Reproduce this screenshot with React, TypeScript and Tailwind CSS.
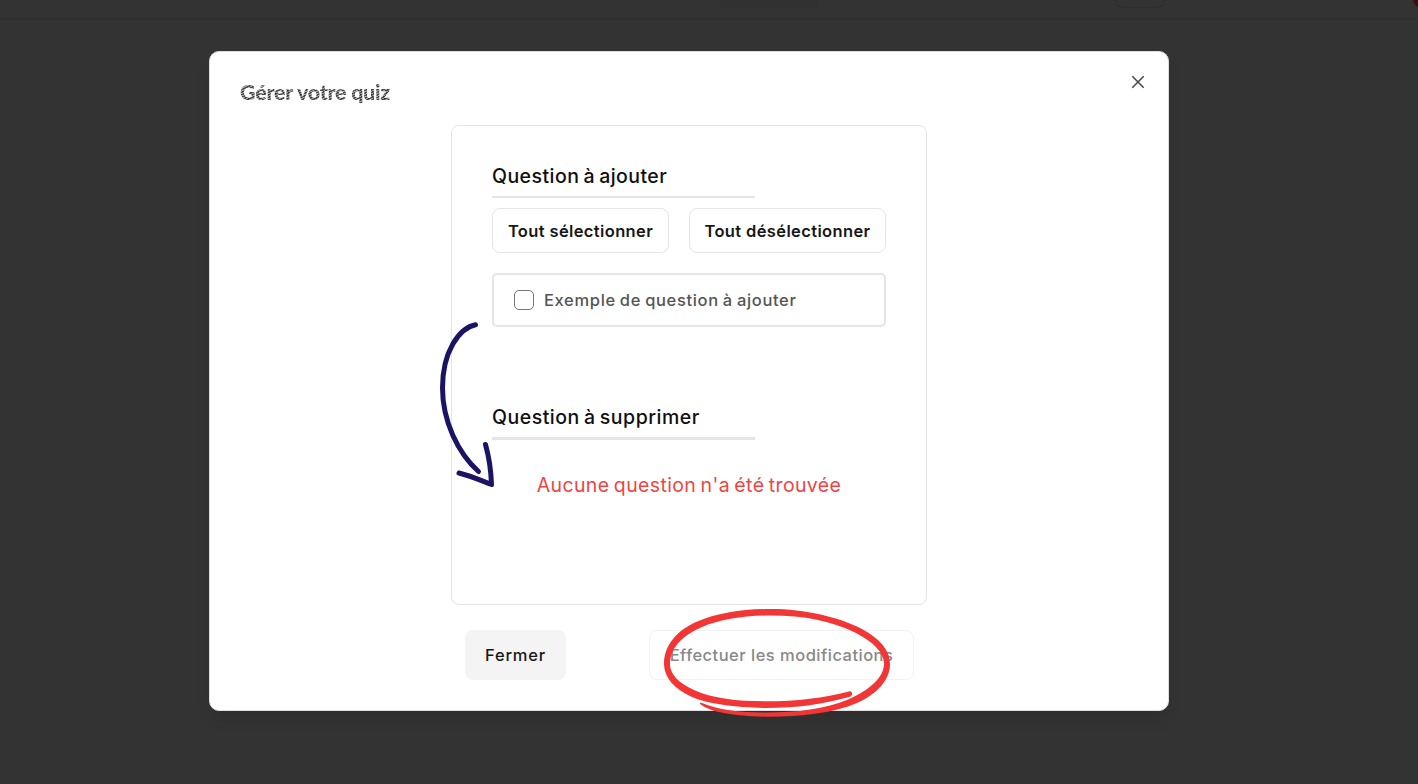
import React from "react";

function SectionTitle({ children, className }: { children: React.ReactNode; className: string }) {
  return (
    <h3 className={`w-[263px] whitespace-nowrap border-[#e5e5e5] text-[19.5px] font-medium leading-[28px] text-[#0f0f0f] [word-spacing:-1.5px] ${className}`}>
      {children}
    </h3>
  );
}

function Arrow() {
  return (
    <svg className="pointer-events-none absolute left-[430px] top-[310px]" width="80" height="190" viewBox="430 310 80 190" fill="none" stroke="#1b1464" strokeWidth="5" strokeLinecap="round" strokeLinejoin="round">
      <path d="M475.5 324.700C459 328 442.500 352 442.500 388C442.500 421 458 453 478.500 471.500" />
      <path d="M485.500 444.500C489 457 491 470 491.500 484.500C481 480.500 471 476 459 473" />
    </svg>
  );
}

function Ring() {
  return (
    <svg className="pointer-events-none absolute left-[655px] top-[600px]" width="245" height="125" viewBox="655 600 245 125" fill="#f23535">
      <path d="M851 691.500C853 693 852 696 850 696.700C824 704 796 708 766 708C736 707.500 708 704 692 697C674 689 664 677 664 664C664 646 676 631 696 622C718 612.500 744 609 771 609C805 609 839 617 862 629C880 639 890 650 890 664C890 680 877 694 857 703C834 713 803 716.700 766 716.700C736 716 711 713 700 704C699.500 703 701 702.500 702 703C718 710 741 712.500 766 712.500C796 712.500 826 709 848 699.500C870 690 884 677 884 664C884 652 873 642 856 633C832 621 804 615.500 771 615.500C745 615.500 721 619 702 627C681 636 670 649 670 664C670 674 678 683 695 690.500C713 698.500 738 701.300 766 701.300C797 701.300 824 698 849 691.500C850 691 850.500 691 851 691.500Z" />
    </svg>
  );
}

export default function App() {
  return (
    <div className="relative h-[784px] w-full overflow-hidden bg-[#333333] font-['Inter','Liberation_Sans',sans-serif]">
      <header className="flex h-5 items-start border-b-2 border-[#2f2f2f]">
        <div className="ml-[719px] h-2 w-[101px] shrink-0 rounded-b-lg bg-[#313131]" />
        <div className="ml-[295px] h-2 w-[50px] shrink-0 rounded-b-lg border border-t-0 border-[#2e2e2e]" />
        <div className="-mt-[10px] ml-[248px] h-[18px] w-[18px] shrink-0 rounded-full bg-[#3b0f0c]" />
      </header>

      <main className="flex justify-center pt-[31px]">
        <section className="-ml-[40px] flex h-[660px] w-[960px] flex-col rounded-[10px] border border-[#dedede] bg-white shadow-[0_10px_15px_-3px_rgba(0,0,0,0.1)]">
          <div className="flex h-[73px] shrink-0 items-start justify-between pl-[30px] pr-[23px] pt-[23px]">
            <h2 className="mt-0.5 bg-[repeating-linear-gradient(155deg,#333_0px,#555_1.2px,#bbb_1.7px,#888_2.3px)] bg-clip-text font-['Lato',sans-serif] text-[21.5px] font-black leading-[30px] tracking-[-0.28px] text-transparent">
              Gérer votre quiz
            </h2>
            <button aria-label="Fermer">
              <svg width="14" height="14" viewBox="0 0 14 14" fill="none" stroke="#444" strokeWidth="1.5">
                <path d="M1.300 1.300L12.700 12.700M12.700 1.300L1.300 12.700" />
              </svg>
            </button>
          </div>

          <div className="mx-auto flex h-[480px] w-[476px] shrink-0 flex-col rounded-lg border border-[#e5e5e5] px-10 pt-[36px]">
            <SectionTitle className="h-9 border-b-2 tracking-[0.45px]">Question à ajouter</SectionTitle>
            <div className="mt-[10px] flex gap-5 text-[16.5px] font-semibold tracking-[0.37px] text-[#171717]">
              <button className="h-[45px] w-[177px] whitespace-nowrap rounded-lg border border-[#e5e5e5] pt-0.5">Tout sélectionner</button>
              <button className="h-[45px] w-[197px] whitespace-nowrap rounded-lg border border-[#e5e5e5] pt-0.5">Tout désélectionner</button>
            </div>
            <label className="mt-5 flex h-[54px] items-center gap-[10px] rounded-[5px] border-2 border-[#e5e5e5] pl-5 text-[16.5px] font-medium tracking-[0.66px] text-[#555] [word-spacing:-1px]">
              <span className="h-5 w-5 rounded-[5px] border border-[#777]" />
              <span className="whitespace-nowrap pt-px">Exemple de question à ajouter</span>
            </label>
            <SectionTitle className="mt-[76px] h-[37px] border-b-[3px] tracking-[0.51px]">Question à supprimer</SectionTitle>
            <p className="mt-[31px] whitespace-nowrap text-center text-[19.5px] leading-[28px] tracking-[0.37px] text-[#ef4444] [word-spacing:-1.5px]">Aucune question n'a été trouvée</p>
          </div>

          <footer className="mt-[25px] flex justify-between pl-[255px] pr-[254px] text-[16.5px] font-medium">
            <button className="h-[50px] w-[101px] rounded-lg bg-[#f4f4f4] tracking-[0.8px] text-[#171717]">Fermer</button>
            <button className="h-[50px] w-[265px] whitespace-nowrap rounded-lg border border-[#f2f2f2] tracking-[0.48px] text-[#888]">Effectuer les modifications</button>
          </footer>
        </section>
      </main>
      <Arrow />
      <Ring />
    </div>
  );
}
